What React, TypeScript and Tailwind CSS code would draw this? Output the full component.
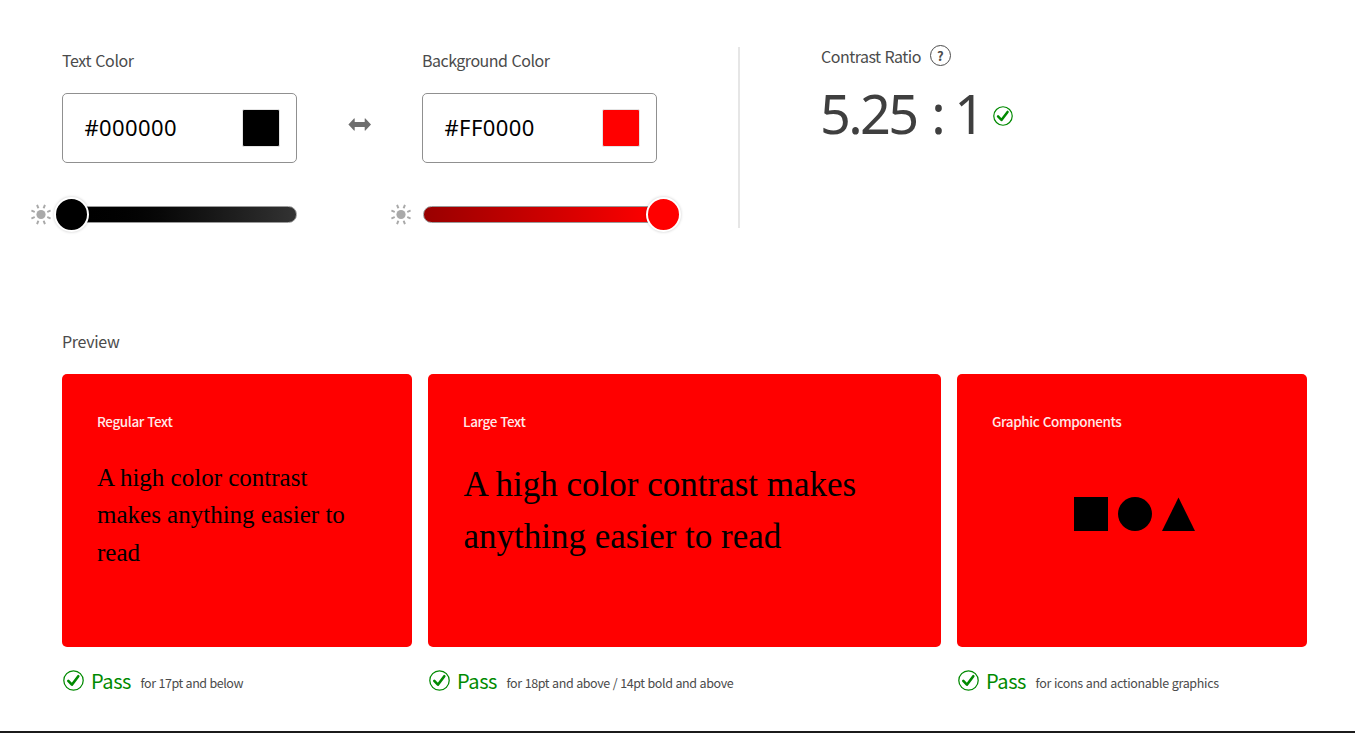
import type { ReactNode } from "react";

const SANS = "font-['Noto_Sans_CJK_SC','Noto_Sans',sans-serif]";
const SERIF = "font-['Liberation_Serif','Times_New_Roman',serif]";
const NUMERIC = "font-['Noto_Sans',sans-serif]";

function Sun() {
  return (
    <svg className="size-[22px] shrink-0" viewBox="0 0 22 22" fill="#a9a9a9">
      <circle cx="11" cy="10.5" r="4.6" />
      {[22.5, 67.5, 112.5, 157.5, 202.5, 247.5, 292.5, 337.5].map((angle) => (
        <rect key={angle} x="10" y="0.1" width="2" height="3.7" rx="0.3" transform={`rotate(${angle} 11 10.5)`} />
      ))}
    </svg>
  );
}

function SwapArrow() {
  return (
    <svg className="h-[13px] w-[24px]" viewBox="0 0 24 13" fill="#6e6e6e">
      <path d="M0.4 6.5 6 .5Q6.7 0 6.7.9V4h10V.9Q16.7 0 17.4.5L23 6.5l-5.6 6q-.7.5-.7-.4V9h-10v3.1q0 .9-.7.4Z" />
    </svg>
  );
}

function CheckBadge({ className }: { className: string }) {
  return (
    <svg className={className} viewBox="0 0 21 21" fill="none">
      <circle cx="10.5" cy="10.5" r="9.7" stroke="#008a00" strokeWidth="1.25" />
      <path d="M5.3 10.9 8.9 14.7 15.3 6.2" stroke="#008a00" strokeWidth="2.6" strokeLinecap="round" strokeLinejoin="round" />
    </svg>
  );
}

function ColorField({ label, value, swatch, tracking }: { label: string; value: string; swatch: string; tracking: string }) {
  return (
    <div className="w-[235px]">
      <h2 className={`h-[46px] whitespace-nowrap pt-px text-[16px] leading-6 text-[#4b4b4b] ${tracking}`}>{label}</h2>
      <div className="flex h-[70px] items-center justify-between rounded-[5px] border border-[#909090] pr-4 pl-[21.5px]">
        <span className={`mb-[2px] text-[22px] leading-8 tracking-[0.4px] text-black ${NUMERIC}`}>{value}</span>
        <span className={`size-[38px] rounded-[2px] border border-[#e4e4e4] ${swatch}`} />
      </div>
    </div>
  );
}

function Slider({ track, thumb, position }: { track: string; thumb: string; position: string }) {
  return (
    <div className="flex h-[35px] items-center">
      <Sun />
      <div className={`relative ml-[11px] h-[17px] w-[234px] rounded-full border border-[#9a9a9a] ${track}`}>
        <span className={`absolute -top-[10px] size-[35px] rounded-full border-2 border-white shadow-[0_0_3px_rgba(0,0,0,0.2)] ${thumb} ${position}`} />
      </div>
    </div>
  );
}

function PreviewCard({ title, note, noteTracking, children }: { title: string; note: string; noteTracking: string; children: ReactNode }) {
  return (
    <article>
      <div className="h-[273px] rounded-[5px] bg-[#ff0000] px-[35px] pt-[36px]">
        <h3 className="text-[13.5px] leading-[22px] font-medium tracking-[-0.4px] text-[#ffe9e9] [word-spacing:0.7px]">{title}</h3>
        {children}
      </div>
      <div className="flex h-[68px] items-center pl-px whitespace-nowrap">
        <CheckBadge className="mb-px size-[21px] shrink-0" />
        <span className="ml-[7px] text-[20px] leading-7 tracking-[-0.4px] text-[#008a00]">Pass</span>
        <span className={`ml-[9.5px] pt-[3px] text-[12.5px] leading-5 text-[#4b4b4b] ${noteTracking}`}>{note}</span>
      </div>
    </article>
  );
}

export default function App() {
  return (
    <main className={`flex h-[733px] w-[1355px] flex-col overflow-hidden border-b-2 border-[#1b1b1b] bg-white pt-[47px] ${SANS}`}>
      <section className="flex h-[282px]">
        <div className="w-[677px] pl-[30px]">
          <div className="flex pl-[32px]">
            <ColorField label="Text Color" value="#000000" swatch="bg-black" tracking="tracking-[-0.4px] [word-spacing:1px]" />
            <div className="flex w-[125px] justify-center pt-[71px]">
              <SwapArrow />
            </div>
            <ColorField label="Background Color" value="#FF0000" swatch="bg-[#ff0000]" tracking="tracking-[-0.5px] [word-spacing:1px]" />
          </div>
          <div className="mt-[34px] flex gap-[93px]">
            <Slider track="bg-linear-to-r from-black to-[#333333]" thumb="bg-black" position="-left-[10px]" />
            <Slider track="bg-linear-to-r from-[#990000] to-[#ff0000]" thumb="bg-[#ff0000]" position="left-[222px]" />
          </div>
        </div>
        <div className="ml-[61px] h-[181px] w-[2px] bg-[#e6e6e6]" />
        <div className="ml-[81px] -mt-[4px]">
          <div className="flex h-[25px] items-center">
            <h2 className="text-[16px] leading-6 tracking-[-0.5px] text-[#4b4b4b] [word-spacing:0.7px]">Contrast Ratio</h2>
            <span className="ml-[9px] flex size-[21px] items-center justify-center rounded-full border-[1.5px] border-[#4b4b4b] pb-px text-[13px] leading-none font-bold text-[#4b4b4b]">?</span>
          </div>
          <div className={`flex h-[92px] items-center text-[54px] leading-[72px] text-[#3f3f3f] ${NUMERIC}`}>
            <span className="-ml-[1px] mb-[2px] tracking-[-2.7px] whitespace-pre">
              5.25<span className="ml-[3.5px]"> : </span>1
            </span>
            <CheckBadge className="mt-[3px] ml-[10.5px] size-5" />
          </div>
        </div>
      </section>
      <section className="px-[62px]">
        <h2 className="h-[45px] text-[16px] leading-6 tracking-[-0.3px] text-[#4b4b4b]">Preview</h2>
        <div className="grid grid-cols-[350px_513px_350px] gap-x-4">
          <PreviewCard title="Regular Text" note="for 17pt and below" noteTracking="tracking-[-0.45px] [word-spacing:0.5px]">
            <p className={`mt-[26.6px] text-[25px] leading-[37.5px] text-black ${SERIF}`}>
              A high color contrast<br />makes anything easier to<br />read
            </p>
          </PreviewCard>
          <PreviewCard title="Large Text" note="for 18pt and above / 14pt bold and above" noteTracking="tracking-[-0.4px] [word-spacing:0.5px]">
            <p className={`mt-[27px] ml-[0.5px] text-[35px] leading-[52px] whitespace-nowrap text-black ${SERIF}`}>
              A high color contrast makes<br />anything easier to read
            </p>
          </PreviewCard>
          <PreviewCard title="Graphic Components" note="for icons and actionable graphics" noteTracking="tracking-[-0.33px] [word-spacing:0.5px]">
            <div className="mt-[65px] ml-[82px] flex gap-[10px]">
              <span className="size-[34px] bg-black" />
              <span className="size-[34px] rounded-full bg-black" />
              <svg className="size-[34px]" viewBox="0 0 34 34">
                <path d="M16.5 0.5 33 34H0Z" fill="black" />
              </svg>
            </div>
          </PreviewCard>
        </div>
      </section>
    </main>
  );
}
